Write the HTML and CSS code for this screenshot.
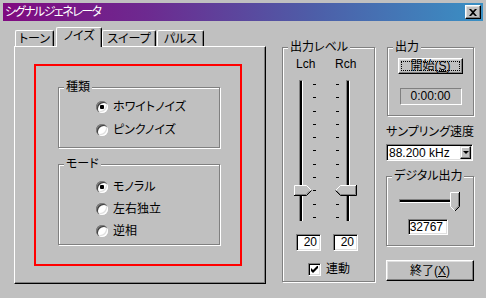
FILE: index.html
```html
<!DOCTYPE html>
<html>
<head>
    <meta charset="UTF-8">
    <title>シグナルジェネレータ</title>
    <link rel="stylesheet" href="styles.css">
</head>
<body>
    <div class="window">
        <div class="titlebar">
            <span class="title">シグナルジェネレータ</span>
            <div class="close-btn">
                <svg width="8" height="7" viewBox="0 0 8 7"><path d="M0 0h2l2 2 2-2h2L5 3.5 8 7H6L4 5 2 7H0l3-3.5z"/></svg>
            </div>
        </div>

        <div class="main">
            <!-- tabs -->
            <div class="tabs-col">
                <div class="tab-row">
                    <div class="tab tab-tone">トーン</div>
                    <div class="tab tab-noise active">ノイズ</div>
                    <div class="tab tab-sweep">スイープ</div>
                    <div class="tab tab-pulse">パルス</div>
                </div>
                <div class="tab-panel">
                    <div class="highlight">
                        <div class="group group-kind">
                            <span class="group-label">種類</span>
                            <div class="radio-row"><span class="radio checked"></span>ホワイトノイズ</div>
                            <div class="radio-row"><span class="radio"></span>ピンクノイズ</div>
                        </div>
                        <div class="group group-mode">
                            <span class="group-label">モード</span>
                            <div class="radio-row"><span class="radio checked"></span>モノラル</div>
                            <div class="radio-row"><span class="radio"></span>左右独立</div>
                            <div class="radio-row"><span class="radio"></span>逆相</div>
                        </div>
                    </div>
                </div>
            </div>

            <!-- output level -->
            <div class="group group-level">
                <span class="group-label">出力レベル</span>
                <div class="ch-labels"><span>Lch</span><span>Rch</span></div>
                <div class="sliders">
                    <div class="vtrack">
                        <svg class="thumb thumb-lch" width="18" height="11" viewBox="0 0 18 11">
                            <path d="M0.5 10.5V0.5H12.5L17.5 5.5L12.5 10.5Z" fill="#c0c0c0"/>
                            <path d="M0.5 10V0.5H12.5L17 5" fill="none" stroke="#fff"/>
                            <path d="M0 10.5H12.5L17.5 5.5" fill="none" stroke="#000"/>
                            <path d="M1 9.5H12L15.5 6" fill="none" stroke="#808080"/>
                        </svg>
                    </div>
                    <div class="ticks ticks-l"><i></i><i></i><i></i><i></i><i></i><i></i><i></i><i></i><i></i><i></i><i></i></div>
                    <div class="ticks ticks-r"><i></i><i></i><i></i><i></i><i></i><i></i><i></i><i></i><i></i><i></i><i></i></div>
                    <div class="vtrack vtrack-r">
                        <svg class="thumb thumb-rch" width="22" height="11" viewBox="0 0 22 11">
                            <path d="M21.5 0.5H5.5L0.5 5.5L5.5 10.5H21.5Z" fill="#c0c0c0"/>
                            <path d="M21 0.5H5.5L0.5 5.5" fill="none" stroke="#fff"/>
                            <path d="M0.5 5.5L5.5 10.5H21.5V0" fill="none" stroke="#000"/>
                            <path d="M2 6L5.5 9.5H20.5V1" fill="none" stroke="#808080"/>
                        </svg>
                    </div>
                </div>
                <div class="level-values">
                    <span class="field">20</span>
                    <span class="field">20</span>
                </div>
                <div class="link-row">
                    <span class="checkbox">
                        <svg width="7" height="7" viewBox="0 0 7 7"><path d="M0 2v3l2 2 5-5V-1L2 4z"/></svg>
                    </span>
                    連動
                </div>
            </div>

            <!-- right column -->
            <div class="right-col">
                <div class="group group-out">
                    <span class="group-label">出力</span>
                    <div class="btn btn-start">開始(<u>S</u>)</div>
                    <div class="time-box">0:00:00</div>
                </div>

                <div class="rate-label">サンプリング速度</div>
                <div class="select">
                    <span class="select-value">88.200 kHz</span>
                    <span class="select-btn"><i></i></span>
                </div>

                <div class="group group-digital">
                    <span class="group-label">デジタル出力</span>
                    <div class="hslider">
                        <div class="htrack"></div>
                        <svg class="thumb thumb-down" width="10" height="19" viewBox="0 0 10 19">
                            <path d="M0.5 0.5H9.5V14.5L5 19L0.5 14.5Z" fill="#c0c0c0"/>
                            <path d="M0.5 14.5V0.5H9.5M0.5 14.5L4.5 18.5" fill="none" stroke="#fff"/>
                            <path d="M9.5 0V14.5L5 19" fill="none" stroke="#000"/>
                            <path d="M8.5 1V14L5 17.5" fill="none" stroke="#808080"/>
                        </svg>
                    </div>
                    <span class="field field-digital">32767</span>
                </div>

                <div class="btn btn-quit">終了(<u>X</u>)</div>
            </div>
        </div>
    </div>
</body>
</html>
```

FILE: styles.css
```css
* {
    margin: 0;
    padding: 0;
    box-sizing: border-box;
}

body {
    width: 486px;
    height: 298px;
    overflow: hidden;
    background: #c0c0c0;
    color: #000;
    font-family: "Liberation Sans", "Noto Sans CJK JP", sans-serif;
    font-size: 12px;
    line-height: 14px;
    font-feature-settings: "palt";
}

.window {
    padding: 3px;
}

/* title bar */
.titlebar {
    height: 18px;
    display: flex;
    align-items: center;
    justify-content: space-between;
    padding: 0 2px;
    background: linear-gradient(to right, #800a80 0%, #6d2a90 30%, #4d5ea8 65%, #3a90c4 100%);
    color: #fff;
}

.title {
    letter-spacing: -1.5px;
}

.close-btn {
    width: 16px;
    height: 14px;
    display: flex;
    align-items: center;
    justify-content: center;
    background: #c0c0c0;
    border: 1px solid;
    border-color: #fff #000 #000 #fff;
    box-shadow: inset -1px -1px #808080, inset 1px 1px #dfdfdf;
}

.main {
    display: flex;
    align-items: flex-start;
    padding: 6px 0 0 11px;
}

/* tabs */
.tabs-col {
    width: 252px;
}

.tab-row {
    height: 19px;
    display: flex;
    align-items: flex-end;
    padding-left: 1px;
}

.tab {
    height: 16px;
    display: flex;
    align-items: center;
    justify-content: center;
    border: 1px solid;
    border-bottom: none;
    border-color: #fff #000 #000 #fff;
    border-radius: 2px 2px 0 0;
    box-shadow: inset -1px 0 #808080;
}

.tab-tone { width: 39px; }
.tab-noise { width: 46px; margin-left: 2px; }
.tab-sweep { width: 54px; }
.tab-pulse { width: 47px; margin-left: 1px; }

.tab.active {
    height: 20px;
    margin-bottom: -1px;
    padding-bottom: 3px;
    background: #c0c0c0;
    position: relative;
    z-index: 1;
}

.tab-panel {
    height: 238px;
    border: 1px solid;
    border-color: #fff #000 #000 #fff;
    box-shadow: inset -1px -1px #808080;
    padding: 17px 0 0 19px;
}

.highlight {
    width: 208px;
    height: 202px;
    border: 2px solid #ff0000;
    padding: 21px 0 0 22px;
}

/* group boxes */
.group {
    position: relative;
    border: 1px solid #808080;
    box-shadow: inset 1px 1px #fff, 1px 1px #fff;
}

.group-label {
    position: absolute;
    top: -8px;
    left: 5px;
    padding: 0 2px;
    background: #c0c0c0;
    white-space: nowrap;
}

.group-kind {
    width: 162px;
    height: 61px;
    padding-top: 7px;
}

.group-kind .radio-row {
    height: 23px;
}

.group-mode {
    width: 162px;
    height: 81px;
    margin-top: 16px;
    padding-top: 11px;
}

.group-mode .radio-row {
    height: 22px;
}

.radio-row {
    display: flex;
    align-items: center;
    padding-left: 37px;
}

.radio {
    position: relative;
    width: 12px;
    height: 12px;
    margin-right: 5px;
    flex: none;
    border-radius: 50%;
    background: #fff;
    box-shadow: inset 1px 1px 0 #808080, inset 2px 2px 0 #404040, inset -1px -1px 0 #fff, inset -2px -2px 0 #dfdfdf;
}

.radio.checked::after {
    content: "";
    position: absolute;
    left: 4px;
    top: 4px;
    width: 4px;
    height: 4px;
    border-radius: 1px;
    background: #000;
}

/* output level */
.group-level {
    width: 93px;
    height: 235px;
    margin: 20px 0 0 16px;
    padding-top: 9px;
}

.ch-labels {
    display: flex;
    padding-left: 13px;
}

.ch-labels span {
    width: 42px;
}

.sliders {
    display: flex;
    align-items: flex-start;
    height: 141px;
    margin-top: 9px;
    padding-left: 16px;
}

.vtrack {
    position: relative;
    width: 4px;
    height: 141px;
    border-left: 1px solid #808080;
    border-right: 1px solid #fff;
    border-top: 1px solid #808080;
    background: #000;
}

.vtrack-r {
    margin-left: 7px;
}

.thumb {
    position: absolute;
    display: block;
}

.thumb-lch {
    left: -6px;
    top: 104px;
}

.thumb-rch {
    left: -12px;
    top: 104px;
}

.ticks {
    width: 3px;
    height: 134px;
    margin-top: 4px;
    display: flex;
    flex-direction: column;
    justify-content: space-between;
}

.ticks i {
    display: block;
    height: 1px;
    background: #000;
}

.ticks-l { margin-left: 10px; }
.ticks-r { margin-left: 20px; }

.field {
    display: block;
    height: 17px;
    background: #fff;
    border: 1px solid;
    border-color: #808080 #fff #fff #808080;
    box-shadow: inset 1px 1px #000, inset -1px -1px #dfdfdf;
    text-align: right;
    padding-right: 3px;
    line-height: 14px;
}

.level-values {
    display: flex;
    margin-top: 13px;
    padding-left: 13px;
}

.level-values .field {
    width: 25px;
}

.level-values .field + .field {
    margin-left: 12px;
}

.link-row {
    display: flex;
    align-items: center;
    margin-top: 11px;
    padding-left: 25px;
}

.checkbox {
    width: 13px;
    height: 13px;
    margin-right: 5px;
    display: flex;
    align-items: center;
    justify-content: center;
    background: #fff;
    border: 1px solid;
    border-color: #808080 #fff #fff #808080;
    box-shadow: inset 1px 1px #000, inset -1px -1px #dfdfdf;
}

/* right column */
.right-col {
    width: 88px;
    margin: 20px 0 0 11px;
}

.group-out {
    width: 87px;
    height: 69px;
    margin-left: 1px;
    display: flex;
    flex-direction: column;
    align-items: center;
}

.btn {
    display: flex;
    align-items: center;
    justify-content: center;
    background: #c0c0c0;
    border: 1px solid;
    border-color: #fff #000 #000 #fff;
    box-shadow: inset -1px -1px #808080, inset 1px 1px #dfdfdf;
}

.btn u {
    text-underline-offset: 1px;
}

.btn-start {
    width: 65px;
    height: 16px;
    margin-top: 10px;
    outline: 1px dotted #000;
    outline-offset: -4px;
}

.time-box {
    width: 62px;
    height: 17px;
    margin-top: 14px;
    border: 1px solid;
    border-color: #808080 #fff #fff #808080;
    text-align: center;
    line-height: 15px;
}

.rate-label {
    margin-top: 9px;
    white-space: nowrap;
}

.select {
    display: flex;
    align-items: center;
    width: 87px;
    height: 17px;
    margin-top: 5px;
    padding-right: 1px;
    background: #fff;
    border: 1px solid;
    border-color: #808080 #fff #fff #808080;
    box-shadow: inset 1px 1px #000, inset -1px -1px #dfdfdf;
}

.select-value {
    flex: 1;
    padding-left: 2px;
}

.select-btn {
    width: 11px;
    height: 13px;
    display: flex;
    align-items: center;
    justify-content: center;
    background: #c0c0c0;
    border: 1px solid;
    border-color: #dfdfdf #000 #000 #dfdfdf;
    box-shadow: inset -1px -1px #808080, inset 1px 1px #fff;
}

.select-btn i {
    border-left: 3px solid transparent;
    border-right: 3px solid transparent;
    border-top: 3px solid #000;
}

.group-digital {
    width: 88px;
    height: 70px;
    margin-top: 15px;
    padding-top: 15px;
}

.hslider {
    position: relative;
    width: 61px;
    height: 19px;
    margin-left: 12px;
    padding-top: 7px;
}

.htrack {
    height: 4px;
    background: #000;
    border-top: 1px solid #808080;
    border-left: 1px solid #808080;
    border-bottom: 1px solid #fff;
}

.thumb-down {
    left: 51px;
    top: 0;
}

.field-digital {
    width: 40px;
    height: 16px;
    margin: 8px 0 0 21px;
    padding-right: 4px;
    line-height: 14px;
}

.btn-quit {
    width: 88px;
    height: 21px;
    margin-top: 14px;
}
```
